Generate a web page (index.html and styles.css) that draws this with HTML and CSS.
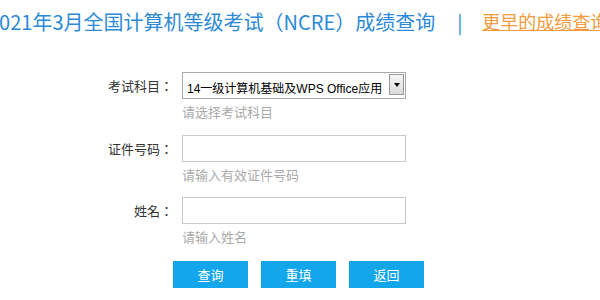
FILE: index.html
```html
<!DOCTYPE html>
<html>
<head>
  <meta charset="UTF-8">
  <title>NCRE 成绩查询</title>
  <link rel="stylesheet" href="styles.css">
</head>
<body>
  <div class="top">
    <h2>2021年3月全国计算机等级考试（NCRE）成绩查询</h2>
    <span class="sep">|</span>
    <a href="#" class="more">更早的成绩查询</a>
  </div>

  <form class="query" id="queryForm">
    <!-- 考试科目 -->
    <div class="row">
      <label for="km">考试科目：</label>
      <div class="pick">
        <select id="km" name="km">
          <option>14一级计算机基础及WPS Office应用</option>
        </select>
        <span class="arrow"></span>
      </div>
      <p class="tip">请选择考试科目</p>
    </div>

    <!-- 证件号码 -->
    <div class="row">
      <label for="zjhm">证件号码：</label>
      <input type="text" id="zjhm" name="zjhm">
      <p class="tip">请输入有效证件号码</p>
    </div>

    <!-- 姓名 -->
    <div class="row">
      <label for="name">姓名：</label>
      <input type="text" id="name" name="name">
      <p class="tip">请输入姓名</p>
    </div>

    <div class="btns">
      <button type="button">查询</button>
      <button type="reset">重填</button>
      <button type="button">返回</button>
    </div>
  </form>
</body>
</html>
```

FILE: styles.css
```css
body { margin: 0; font-family: "Noto Sans CJK SC", sans-serif; background: #fff; color: #333; overflow: hidden; }

.top { display: flex; align-items: center; height: 42px; margin-left: -12px; white-space: nowrap; }
.top h2 { margin: 0; flex-shrink: 0; font-size: 20px; font-weight: normal; color: #2c8ad8; }
.sep { flex-shrink: 0; margin: 0 20px 0 22px; font-size: 19px; color: #2c8ad8; }
.more { flex-shrink: 0; font-size: 18px; color: #f39a3c; }

.query { margin-top: 30px; }
.row {
  display: grid;
  grid-template-columns: 173px 224px;
  column-gap: 9px;
  margin-bottom: 12.5px;
}
/* TC face centres the full-width colon */
.row label { font-family: "Noto Sans CJK TC", sans-serif; font-size: 13px; line-height: 27px; text-align: right; color: #333; }

.pick { display: flex; height: 27px; box-sizing: border-box; border: 1px solid #a9a9a9; background: #fff; }
.pick select {
  flex: 1;
  min-width: 0;
  appearance: none;
  border: 0;
  background: transparent;
  padding: 6px 0 0 4px;
  font-family: "Liberation Sans", "Noto Sans CJK SC", sans-serif;
  font-size: 12px;
  color: #000;
  outline: none;
}
.arrow {
  width: 13px;
  margin: 1px 1px 3px 0;
  border: 1px solid #999;
  background: linear-gradient(#f6f6f6, #dadada);
  display: flex;
  align-items: center;
  justify-content: center;
}
.arrow::after { content: ""; border-left: 3px solid transparent; border-right: 3px solid transparent; border-top: 4px solid #000; }

.row input {
  width: 224px;
  height: 27px;
  box-sizing: border-box;
  border: 1px solid #c9c9c9;
  padding: 0 6px;
  font-size: 13px;
  outline: none;
}

.tip { grid-column: 2; margin: 3px 0 0; font-size: 13px; line-height: 20px; color: #aaa; }

.btns { display: flex; gap: 13px; padding-left: 173px; margin-top: 13.5px; }
.btns button {
  width: 75px;
  height: 27px;
  border: none;
  background: #14a6ea;
  color: #fff;
  font-family: inherit;
  font-size: 13px;
  cursor: pointer;
}
```
